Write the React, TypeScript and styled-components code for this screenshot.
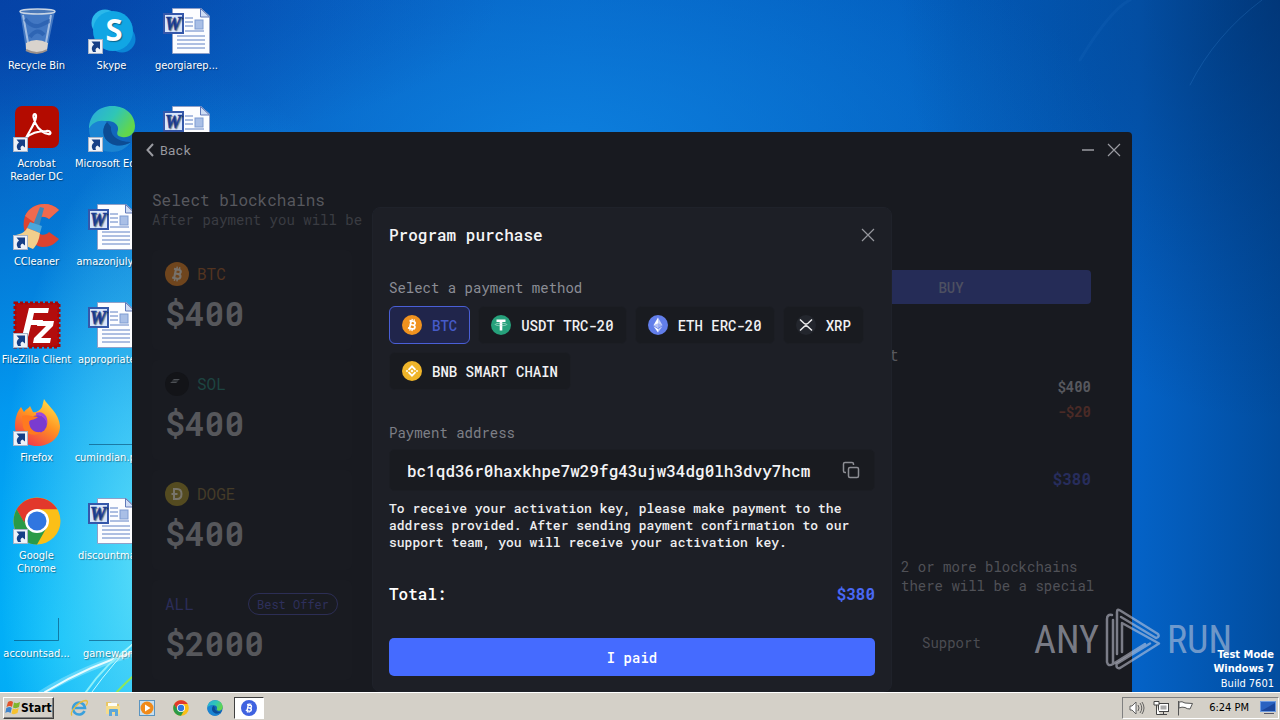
import React, { useState } from 'react';
import styled, { createGlobalStyle } from 'styled-components';

const MONO = '"Roboto Mono", "DejaVu Sans Mono", "Liberation Mono", monospace';
const TAHOMA = 'Tahoma, "DejaVu Sans Condensed", "DejaVu Sans", sans-serif';

const Global = createGlobalStyle`
  * { box-sizing: border-box; }
  body { margin: 0; font-family: ${TAHOMA}; }
  button, input { font: inherit; color: inherit; margin: 0; }
  button { cursor: pointer; }
  h1, h2, h3, p, ul, dl, dd, dt { margin: 0; padding: 0; font-weight: 400; }
  svg { display: block; flex: none; }
`;

const Screen = styled.div`
  display: flex;
  flex-direction: column;
  min-height: 100vh;
`;

const Desktop = styled.main`
  position: relative;
  flex: 1;
  overflow: hidden;
  background:
    radial-gradient(ellipse 150px 420px at 150px 560px, rgba(120, 240, 250, 0.75), rgba(60, 215, 250, 0) 100%),
    radial-gradient(ellipse 480px 600px at 60px 640px, #02b8fa 0%, rgba(2, 160, 246, 0.9) 40%, rgba(4, 130, 230, 0) 100%),
    radial-gradient(ellipse 560px 260px at 560px 150px, rgba(14, 132, 226, 0.85), rgba(10, 110, 208, 0) 100%),
    linear-gradient(to right, #0650b4 0%, #0562c4 45%, #025cbc 75%, #0462c6 89%, #014c9e 100%);
`;

const Wallpaper = styled.svg`
  position: absolute;
  inset: 0;
  width: 100%;
  height: 100%;
`;

const Shade = styled.div`
  position: absolute;
  inset: 0;
  background:
    radial-gradient(ellipse 380px 420px at 100% 0, rgba(0, 34, 84, 0.5), rgba(0, 40, 100, 0) 100%),
    radial-gradient(ellipse 500px 160px at 0 0, rgba(4, 50, 150, 0.45), rgba(4, 60, 160, 0) 100%);
`;

const Shortcuts = styled.ul`
  position: relative;
  display: grid;
  grid-auto-flow: column;
  grid-template-rows: repeat(7, 98px);
  grid-auto-columns: 73px;
  column-gap: 2px;
  list-style: none;
  padding-top: 7px;
  width: max-content;
  height: 0;
`;

const Shortcut = styled.li`
  position: relative;
  display: flex;
  flex-direction: column;
  align-items: center;
  gap: 4px;
  color: #fff;
  font-size: 11px;
  line-height: 13px;
  text-align: center;
  text-shadow: 1px 1px 1px rgba(0, 0, 0, 0.4);
`;

const ShortcutName = styled.span<{ $wrap?: boolean }>`
  white-space: ${(p) => (p.$wrap ? 'normal' : 'nowrap')};
`;

const AppWindow = styled.section`
  position: absolute;
  left: 132px;
  right: 148px;
  top: 132px;
  bottom: 0;
  overflow: hidden;
  display: flex;
  flex-direction: column;
  background: #181a20;
  border-radius: 4px 4px 0 0;
  color: #57585e;
  font-family: ${MONO};
  font-size: 14px;
`;

const TitleBar = styled.header`
  display: flex;
  align-items: center;
  justify-content: space-between;
  height: 36px;
  padding: 0 11px 0 14px;
  color: #9a9ba1;
`;

const WindowControls = styled.div`
  display: flex;
  gap: 12px;
`;

const PlainButton = styled.button`
  display: flex;
  align-items: center;
  gap: 6px;
  padding: 0;
  border: 0;
  background: none;
  font-size: 13px;
`;

const Page = styled.div`
  display: flex;
  justify-content: space-between;
  flex: 1;
  padding: 21px 41px 0 20px;
`;

const Plans = styled.div`
  display: flex;
  flex-direction: column;
  width: 220px;
`;

const PageTitle = styled.h1`
  font-size: 16px;
  line-height: 22px;
`;

const Hint = styled.p`
  line-height: 18px;
  color: #3a3c42;
  white-space: nowrap;
`;

const PlanList = styled.ul`
  display: flex;
  flex-direction: column;
  gap: 10px;
  margin-top: 21px;
  list-style: none;
`;

const PlanCard = styled.li`
  display: flex;
  flex-direction: column;
  gap: 8px;
  width: 200px;
  height: 100px;
  padding: 12px 13px;
  border-radius: 6px;
  background: #191b21;
`;

const PlanHead = styled.div`
  display: flex;
  align-items: center;
  gap: 8px;
  height: 24px;
`;

const PlanName = styled.h3<{ $tone: string }>`
  font-size: 16px;
  line-height: 22px;
  color: ${(p) => p.$tone};
`;

const PlanPrice = styled.p`
  font-size: 33px;
  line-height: 38px;
  font-weight: 700;
  color: #56575b;
`;

const Offer = styled.span`
  margin: 0 1px 0 auto;
  padding: 0 8px;
  border: 1px solid #2c2e55;
  border-radius: 11px;
  font-size: 12px;
  line-height: 20px;
  color: #2e305c;
  white-space: nowrap;
`;

const Sidebar = styled.aside`
  display: flex;
  flex-direction: column;
  width: 280px;
  padding-top: 81px;
`;

const BuyButton = styled.button`
  height: 34px;
  border: 0;
  border-radius: 4px;
  background: #252c57;
  color: #4d5061;
  font-weight: 500;
`;

const CartTitle = styled.h2`
  margin-top: 40px;
  padding-left: 78px;
  font-size: 16px;
  line-height: 22px;
`;

const Amounts = styled.div`
  display: flex;
  flex-direction: column;
  align-items: flex-end;
  margin-top: 8px;
  line-height: 25px;
  font-weight: 700;
`;

const Discount = styled.span`
  color: #4a2a26;
`;

const Due = styled.strong`
  margin-top: 42px;
  font-size: 16px;
  color: #272d5c;
`;

const Note = styled.p`
  margin-top: 66px;
  padding-left: 90px;
  line-height: 19px;
  white-space: nowrap;
  color: #505157;
`;

const SupportLink = styled.a`
  margin-top: 38px;
  padding-left: 111px;
  line-height: 19px;
  color: #4b4c52;
  text-decoration: none;
`;

const Overlay = styled.div`
  position: absolute;
  inset: 75px 0 0;
  display: flex;
  justify-content: center;
  pointer-events: none;
`;

const Dialog = styled.form`
  display: flex;
  flex-direction: column;
  width: 520px;
  padding: 17px 16px 15px;
  border: 1px solid #1f222a;
  border-radius: 8px;
  background: #1d1f26;
  color: #fff;
  pointer-events: auto;
`;

const DialogHead = styled.header`
  display: flex;
  align-items: center;
  justify-content: space-between;
  height: 20px;
  color: #96979d;
`;

const DialogTitle = styled.h2`
  font-size: 16px;
  line-height: 20px;
  font-weight: 500;
  color: #f4f4f6;
`;

const Methods = styled.fieldset`
  display: flex;
  flex-wrap: wrap;
  gap: 8px;
  min-width: 0;
  margin: 34px 0 0;
  padding: 0;
  border: 0;
`;

const Legend = styled.legend`
  padding: 0;
  margin-bottom: 9px;
  line-height: 18px;
  color: #8b8d95;
`;

const Method = styled.label<{ $on: boolean }>`
  display: flex;
  align-items: center;
  gap: 10px;
  height: 38px;
  padding: 0 12px;
  border: 1px solid ${(p) => (p.$on ? '#4a5fd6' : '#1c1e24')};
  border-radius: 6px;
  background: ${(p) => (p.$on ? '#20254b' : '#191b20')};
  color: ${(p) => (p.$on ? '#465bc8' : '#f1f1f3')};
  font-weight: 500;
  white-space: nowrap;
  cursor: pointer;
`;

const HiddenRadio = styled.input`
  position: absolute;
  opacity: 0;
  width: 1px;
  height: 1px;
`;

const FieldLabel = styled.label`
  margin-top: 34px;
  line-height: 18px;
  color: #7d7f87;
`;

const AddressBox = styled.div`
  display: flex;
  align-items: center;
  height: 42px;
  margin-top: 7px;
  padding: 0 14px 0 18px;
  border: 1px solid #1b1d23;
  border-radius: 6px;
  background: #191b20;
  color: #8d8e94;
`;

const AddressInput = styled.input`
  flex: 1;
  min-width: 0;
  margin-left: -1px;
  padding: 0;
  border: 0;
  outline: 0;
  background: none;
  font-size: 16px;
  font-weight: 500;
  color: #f3f3f5;
`;

const Instructions = styled.p`
  margin-top: 9px;
  font-size: 13px;
  line-height: 17px;
  font-weight: 500;
  color: #eeeef0;
`;

const Total = styled.div`
  display: flex;
  justify-content: space-between;
  margin-top: 32px;
  font-size: 16px;
  line-height: 22px;
  font-weight: 500;
`;

const TotalSum = styled.strong`
  color: #4968f4;
`;

const PaidButton = styled.button`
  flex: none;
  height: 38px;
  margin-top: 33px;
  border: 0;
  border-radius: 5px;
  background: #456bff;
  color: #fff;
  font-weight: 500;
`;

const Watermark = styled.div`
  position: absolute;
  right: 48px;
  bottom: 20px;
  display: flex;
  align-items: center;
  gap: 6px;
  height: 64px;
  color: rgba(205, 208, 222, 0.55);
  font-family: "Liberation Sans Narrow", "Roboto Condensed", Roboto, sans-serif;
  font-size: 38px;
  line-height: 38px;
  pointer-events: none;
`;

const BuildInfo = styled.div`
  position: absolute;
  right: 6px;
  bottom: 0;
  color: #fff;
  font-size: 11px;
  line-height: 14px;
  text-align: right;
`;

const BuildNumber = styled.div`
  line-height: 16px;
`;

const Taskbar = styled.footer`
  display: flex;
  align-items: center;
  height: 28px;
  padding: 3px 1px 1px 3px;
  border-top: 1px solid #fff;
  background: #d4d0c8;
  font-size: 11px;
`;

const StartButton = styled.button`
  display: flex;
  align-items: center;
  width: 51px;
  height: 22px;
  padding: 0 1px;
  border: 1px solid;
  border-color: #fff #404040 #404040 #fff;
  box-shadow: inset -1px -1px #808080;
  background: #d4d0c8;
  font-size: 12px;
  font-weight: 700;
`;

const Launchers = styled.div`
  display: flex;
  align-items: center;
  gap: 4px;
  margin-left: 10px;
`;

const Launcher = styled.button<{ $active?: boolean }>`
  display: flex;
  align-items: center;
  justify-content: center;
  width: 30px;
  height: 22px;
  padding: 0;
  border: 1px solid;
  border-color: ${(p) => (p.$active ? '#404040 #fff #fff #404040' : 'transparent')};
  background: ${(p) => (p.$active ? '#fff' : 'none')};
`;

const Tray = styled.div`
  display: flex;
  align-items: center;
  gap: 8px;
  height: 22px;
  margin-left: auto;
  padding: 0 2px 0 6px;
  border: 1px solid;
  border-color: #808080 #fff #fff #808080;
`;

const Clock = styled.time`
  padding: 0 3px 0 8px;
`;

/* ---------- drawings ---------- */

const Arrow = () => (
  <g transform="translate(0 32)">
    <rect x="0.5" y="0.5" width="14" height="14" fill="#eef2f8" stroke="#a8b4c8" />
    <path d="M3.500 2.500H12V10.500L9.500 8.500C7.500 9 7 11 8 13H5C3 10 3.500 7.500 6 5.500Z" fill="#163f86" />
  </g>
);

const WordDoc = () => (
  <svg width="48" height="48" viewBox="0 0 48 48">
    <path d="M9.500 1.500H38L46.500 9V46.500H9.500Z" fill="#fcfdff" stroke="#8fa0c8" />
    <path d="M37.500 1.500V10H46.500Z" fill="#cfdcf4" stroke="#6079b8" />
    <path d="M22 11h8M22 15h8M22 19h8M22 24h19M14 29h28M14 33h28M14 37h28M14 41h28" stroke="#5f80c4" />
    <rect x="32" y="13" width="8" height="9" fill="#a9bfe6" stroke="#7f9cd2" />
    <rect x="1" y="7" width="19" height="19" fill="#d8e6fb" stroke="#3558aa" strokeWidth="2" />
    <text x="10" y="23" textAnchor="middle" fontFamily="Liberation Serif, serif" fontWeight="700" fontStyle="italic" fontSize="18" fill="#1f429b" stroke="#1f429b" strokeWidth="0.600">W</text>
  </svg>
);

const RecycleBin = () => (
  <svg width="48" height="48" viewBox="0 0 48 48">
    <path d="M7 4L13 43Q24 49 34 43L42 4Z" fill="#7fa9dc" fillOpacity="0.5" />
    <path d="M10 8L16 41M38 8L32 41" stroke="#e2ecf8" strokeWidth="2" opacity="0.6" />
    <path d="M12 12Q20 22 28 18T37 14M17 30Q24 20 31 28" fill="none" stroke="#1f56a8" strokeWidth="4" opacity="0.550" />
    <path d="M13 36Q23 30 35 36L34 43Q24 49 13 43Z" fill="#d9d3cd" />
    <path d="M13 43Q24 49 34 43" fill="none" stroke="#9a8f8a" strokeWidth="2" />
    <ellipse cx="24.500" cy="4.500" rx="17.500" ry="2.500" fill="#4a78b8" stroke="#c9d5e4" strokeWidth="1.500" />
  </svg>
);

const Skype = () => (
  <svg width="48" height="48" viewBox="0 0 48 48">
    <circle cx="17" cy="16" r="13.500" fill="#2bb8ea" />
    <circle cx="34" cy="32" r="13.500" fill="#0a86d6" />
    <circle cx="25" cy="24" r="20" fill="#11a6e4" />
    <text x="26" y="34" textAnchor="middle" fontFamily="Open Sans, sans-serif" fontWeight="700" fontSize="31" fill="#fff">S</text>
    <Arrow />
  </svg>
);

const Acrobat = () => (
  <svg width="48" height="48" viewBox="0 0 48 48">
    <rect x="2" y="1" width="44" height="42" rx="7" fill="#b30b00" />
    <path d="M13 33C17 25 22 19 23 12C23.500 8 20 8 20.500 12C22 20 27 27 35 29C39 30 38 25 33 26C25 26 17 29 13 33Z" fill="none" stroke="#fff" strokeWidth="2.200" />
    <Arrow />
  </svg>
);

const EdgeShape = () => (
  <>
    <defs>
      <linearGradient id="edgeTop" x1="0" y1="0" x2="1" y2="0.500">
        <stop offset="0" stopColor="#2aa8e0" />
        <stop offset="0.550" stopColor="#2fc6b6" />
        <stop offset="1" stopColor="#62d64c" />
      </linearGradient>
    </defs>
    <circle cx="24" cy="24" r="23" fill="#1166bb" />
    <path d="M1 24C1 10 11 1 24 1C39 1 47 11 47 21C47 30 40 33 34 32C28 31 29 28 30 25C31 20 26 16 20 16C11 16 4 20 1 24Z" fill="url(#edgeTop)" />
    <path d="M1 24C4 17 13 14 19 17C14 22 14 33 22 38C29 42 37 41 43 37C38 44 31 47 24 47C10 47 1 36 1 24Z" fill="#1a84d2" />
    <path d="M19 17C14 22 13 33 22 38C29 42 37 41 43 37C35 37 22 34 23 22Z" fill="#0c4c94" />
  </>
);

const Edge = () => (
  <svg width="48" height="48" viewBox="0 0 48 48"><EdgeShape /><Arrow /></svg>
);

const CCleaner = () => (
  <svg width="48" height="48" viewBox="0 0 48 48">
    <path d="M46 7C36 -3 18 0 12 13C7 27 16 43 30 44C37 44 42 41 46 36L36 29C32 34 24 32 22 25C21 17 29 10 36 16Z" fill="#dd4330" />
    <path d="M46 7C36 -3 18 0 12 13L22 20C24 13 31 12 36 16Z" fill="#ef6a4e" />
    <path d="M27 4L31 5 26 24 20 22Z" fill="#3f87b9" />
    <path d="M17 19L29 23 27 30 14 25Z" fill="#4aa7dd" />
    <path d="M14 25L27 30C26 37 24 42 20 46C12 43 6 38 3 32C8 31 12 29 14 25Z" fill="#f2cf8c" />
    <Arrow />
  </svg>
);

const FileZilla = () => (
  <svg width="48" height="48" viewBox="0 0 48 48">
    <rect x="2" y="2" width="44" height="44" fill="#b30d0d" stroke="#a30808" strokeWidth="3" strokeDasharray="3 2" />
    <path d="M16 7H36L35 12H21L19.500 19H30L29 24H18L14 40H8Z" fill="#fff" />
    <path d="M25 20H41L40 25 28 37H38L37 42H20L21 37 33 25H24Z" fill="#fff" />
    <Arrow />
  </svg>
);

const Firefox = () => (
  <svg width="48" height="48" viewBox="0 0 48 48">
    <defs>
      <linearGradient id="fox" x1="0.800" y1="0" x2="0.200" y2="1">
        <stop offset="0" stopColor="#ffe14a" />
        <stop offset="0.450" stopColor="#ff9422" />
        <stop offset="1" stopColor="#f0304e" />
      </linearGradient>
    </defs>
    <path d="M31 0C35 7 46 14 47 27C47 39 37 47 24 47C11 47 2 38 2 27C2 19 4 13 8 8L11 13C14 9 15 10 17 7L20 13C22 14 27 12 29 8Z" fill="url(#fox)" />
    <circle cx="25" cy="25" r="9" fill="#7a3bd0" />
    <path d="M9 17C14 15 18 17 25 18C22 21 19 20 16 22C16 30 21 34 28 33C24 38 12 36 10 28Z" fill="#ff7a1f" />
    <path d="M23 14C31 11 36 19 34 26C33 19 29 16 23 16Z" fill="#9b45e0" />
    <Arrow />
  </svg>
);

const ChromeShape = () => (
  <>
    <circle cx="24" cy="24" r="23.500" fill="#fbbf17" />
    <path d="M3.700 12.300A23.500 23.500 0 0 0 24 47.500L34 30 24 35 14 30Z" fill="#2a9a48" />
    <path d="M3.700 12.300L14 30 24 24Z" fill="#2a9a48" />
    <path d="M3.700 12.300A23.500 23.500 0 0 1 44.300 12.300H24L14 18 11 25Z" fill="#e2382c" />
    <circle cx="24" cy="24" r="12" fill="#fff" />
    <circle cx="24" cy="24" r="9.500" fill="#3076e0" />
  </>
);

const Chrome = () => (
  <svg width="48" height="48" viewBox="0 0 48 48"><ChromeShape /><Arrow /></svg>
);

const EmptyIcon = ({ side }: { side?: boolean }) => (
  <svg width="48" height="48" viewBox="0 0 48 48">
    <path d={side ? 'M1 45.500H45.500V23' : 'M1 45.500H46'} fill="none" stroke="#06486e" opacity="0.600" />
  </svg>
);

const BtcMark = ({ size, bg, fg }: { size: number; bg: string; fg: string }) => (
  <svg width={size} height={size} viewBox="0 0 24 24">
    <circle cx="12" cy="12" r="12" fill={bg} />
    <g transform="rotate(12 12 12)" fill="none" stroke={fg}>
      <path d="M8 7.500H13Q15.300 7.500 15.300 9.600T13 11.800H10M13 11.800Q16 11.900 16 14.200T13.300 16.500H8M10 7.500V16.500" strokeWidth="2.100" />
      <path d="M10.800 4.800V7.500M13.400 4.800V7.500M10.800 16.500V19.200M13.400 16.500V19.200" strokeWidth="1.500" />
    </g>
  </svg>
);

const SolMark = () => (
  <svg width="24" height="24" viewBox="0 0 24 24">
    <circle cx="12" cy="12" r="12" fill="#131418" />
    <path d="M7 8.500L9 7H15L13 8.500ZM5 11L7 9.500H13L11 11Z" fill="#4d5055" />
  </svg>
);

const DogeMark = () => (
  <svg width="24" height="24" viewBox="0 0 24 24">
    <circle cx="12" cy="12" r="12" fill="#544b20" />
    <path d="M9 7H12Q16.500 7 16.500 12T12 17H9ZM6.500 12H12.500" fill="none" stroke="#77746a" strokeWidth="2" />
  </svg>
);

const UsdtMark = () => (
  <svg width="20" height="20" viewBox="0 0 20 20">
    <circle cx="10" cy="10" r="10" fill="#26a17b" />
    <path d="M5.500 4.500H14.500V7H11.300V15.500H8.700V7H5.500Z" fill="#fff" />
    <ellipse cx="10" cy="9.500" rx="5.800" ry="1.200" fill="none" stroke="#c9ebe0" strokeWidth="0.600" />
  </svg>
);

const EthMark = () => (
  <svg width="20" height="20" viewBox="0 0 20 20">
    <circle cx="10" cy="10" r="10" fill="#627eea" />
    <path d="M10 2.500L5.500 10.300 10 13Z" fill="#fff" />
    <path d="M10 2.500L14.500 10.300 10 13Z" fill="#c4cff8" />
    <path d="M5.500 11.200L10 17.500V13.900Z" fill="#fff" />
    <path d="M14.500 11.200L10 17.500V13.900Z" fill="#c4cff8" />
    <path d="M10 8.200L5.500 10.300 10 13 14.500 10.300Z" fill="#8397ec" opacity="0.600" />
  </svg>
);

const XrpMark = () => (
  <svg width="20" height="20" viewBox="0 0 20 20">
    <circle cx="10" cy="10" r="10" fill="#23262d" />
    <path d="M4 4.500L8 8.300Q10 10 12 8.300L16 4.500M4 15.500L8 11.700Q10 10 12 11.700L16 15.500" fill="none" stroke="#eee" strokeWidth="1.500" />
  </svg>
);

const BnbMark = () => (
  <svg width="20" height="20" viewBox="0 0 20 20">
    <circle cx="10" cy="10" r="10" fill="#efb52a" />
    <path d="M6.500 8.800L10 5.300 13.500 8.800M6.500 11.200L10 14.700 13.500 11.200" fill="none" stroke="#fff" strokeWidth="1.800" />
    <path d="M10 8.500L11.500 10 10 11.500 8.500 10ZM5 8.800L6.200 10 5 11.200 3.800 10ZM15 8.800L16.200 10 15 11.200 13.800 10Z" fill="#fff" />
  </svg>
);

const Cross = () => (
  <svg width="14" height="14" viewBox="0 0 14 14"><path d="M1 1L13 13M13 1L1 13" stroke="currentColor" strokeWidth="1.200" /></svg>
);

const WindowsFlag = () => (
  <svg width="16" height="16" viewBox="0 0 16 16">
    <path d="M3 2Q6 0 8 2L7 7Q5 5 1.500 7Z" fill="#e2532a" />
    <path d="M9 2.500Q12 4 15 2L14 7Q11 9 8 7.500Z" fill="#7fb62e" />
    <path d="M1.300 8Q5 6 6.800 8L5.500 13Q3 11 0.300 13Z" fill="#3d84cc" />
    <path d="M7.800 8.500Q11 10 13.700 8L12.500 13Q9 15 6.500 13.500Z" fill="#f7c22f" />
  </svg>
);

const IeIcon = () => (
  <svg width="18" height="18" viewBox="0 0 18 18">
    <path d="M14.500 12A6 6 0 1 1 15 9H5" fill="none" stroke="#3aa0dc" strokeWidth="2.600" />
    <path d="M2 16.500C-1 13 9 2 16 1.500C18.500 2 17 5 16 6.500" fill="none" stroke="#e9bd3a" strokeWidth="1.300" />
  </svg>
);

const ExplorerIcon = () => (
  <svg width="18" height="18" viewBox="0 0 18 18">
    <path d="M2 3H7L8 5H15V15H2Z" fill="#e9c765" />
    <path d="M4 4H13V8H4Z" fill="#fdfdf6" />
    <path d="M2 7H16V15H2Z" fill="#f5dc8c" />
    <path d="M5 17V11Q5 10 6 10H13Q14 10 14 11V17H11V13H8V17Z" fill="#5ea7d8" />
  </svg>
);

const PlayerIcon = () => (
  <svg width="18" height="18" viewBox="0 0 18 18">
    <rect x="1.500" y="1.500" width="15" height="15" fill="#c8dff0" stroke="#5a94c0" />
    <circle cx="9" cy="9" r="6.500" fill="#f08a1a" />
    <path d="M7 5.500L12.500 9 7 12.500Z" fill="#fff" />
  </svg>
);

const desktopItems: { name: string; icon: React.ReactNode; wrap?: boolean }[] = [
  { name: 'Recycle Bin', icon: <RecycleBin /> },
  { name: 'Acrobat Reader DC', icon: <Acrobat />, wrap: true },
  { name: 'CCleaner', icon: <CCleaner /> },
  { name: 'FileZilla Client', icon: <FileZilla /> },
  { name: 'Firefox', icon: <Firefox /> },
  { name: 'Google Chrome', icon: <Chrome />, wrap: true },
  { name: 'accountsad...', icon: <EmptyIcon side /> },
  { name: 'Skype', icon: <Skype /> },
  { name: 'Microsoft Edge', icon: <Edge /> },
  { name: 'amazonjuly.rtf', icon: <WordDoc /> },
  { name: 'appropriate...', icon: <WordDoc /> },
  { name: 'cumindian.png', icon: <EmptyIcon /> },
  { name: 'discountma...', icon: <WordDoc /> },
  { name: 'gamew.png', icon: <EmptyIcon /> },
  { name: 'georgiarep...', icon: <WordDoc /> },
  { name: '', icon: <WordDoc /> },
];

const plans: { name: string; price: string; tone: string; icon?: React.ReactNode; offer?: string }[] = [
  { name: 'BTC', price: '$400', tone: '#533420', icon: <BtcMark size={24} bg="#6f451d" fg="#77726c" /> },
  { name: 'SOL', price: '$400', tone: '#1d4541', icon: <SolMark /> },
  { name: 'DOGE', price: '$400', tone: '#453c28', icon: <DogeMark /> },
  { name: 'ALL', price: '$2000', tone: '#2b2d58', offer: 'Best Offer' },
];

const methods = [
  { id: 'btc', name: 'BTC', icon: <BtcMark size={20} bg="#f0921f" fg="#fff" /> },
  { id: 'usdt', name: 'USDT TRC-20', icon: <UsdtMark /> },
  { id: 'eth', name: 'ETH ERC-20', icon: <EthMark /> },
  { id: 'xrp', name: 'XRP', icon: <XrpMark /> },
  { id: 'bnb', name: 'BNB SMART CHAIN', icon: <BnbMark /> },
];

export default function App() {
  const [method, setMethod] = useState('btc');

  return (
    <Screen>
      <Global />
      <Desktop>
        <Shade />
        <Wallpaper viewBox="0 0 1280 692" preserveAspectRatio="none" aria-hidden="true">
          <g fill="none" strokeLinecap="round">
            <path d="M40 694Q85 666 140 652" stroke="#c8f6ff" strokeWidth="6" opacity="0.350" />
            <path d="M45 692Q90 665 140 650" stroke="#e6fcff" strokeWidth="2" />
            <path d="M86 692Q105 664 136 642" stroke="#8ff0fa" strokeWidth="2" />
            <path d="M92 692Q112 664 140 636" stroke="#c8faff" strokeWidth="1" />
            <path d="M117 692Q124 684 140 670" stroke="#8ee85a" strokeWidth="2" />
            <path d="M1190 85Q1215 35 1262 0" stroke="#3c8bd6" opacity="0.250" />
            <path d="M1080 60Q1110 10 1130 0" stroke="#3c8bd6" opacity="0.100" strokeWidth="3" />
          </g>
        </Wallpaper>
        <Shortcuts>
          {desktopItems.map((item, i) => (
            <Shortcut key={i}>
              {item.icon}
              <ShortcutName $wrap={item.wrap}>{item.name}</ShortcutName>
            </Shortcut>
          ))}
        </Shortcuts>

        <AppWindow>
          <TitleBar>
            <PlainButton type="button">
              <svg width="8" height="14" viewBox="0 0 8 14"><path d="M7 1L1.500 7 7 13" fill="none" stroke="currentColor" strokeWidth="2" /></svg>
              Back
            </PlainButton>
            <WindowControls>
              <PlainButton type="button" aria-label="Minimize">
                <svg width="14" height="14" viewBox="0 0 14 14"><path d="M1 7H13" stroke="currentColor" strokeWidth="1.500" /></svg>
              </PlainButton>
              <PlainButton type="button" aria-label="Close window"><Cross /></PlainButton>
            </WindowControls>
          </TitleBar>
          <Page>
            <Plans>
              <PageTitle>Select blockchains</PageTitle>
              <Hint>After payment you will be</Hint>
              <PlanList>
                {plans.map((plan) => (
                  <PlanCard key={plan.name}>
                    <PlanHead>
                      {plan.icon}
                      <PlanName $tone={plan.tone}>{plan.name}</PlanName>
                      {plan.offer && <Offer>{plan.offer}</Offer>}
                    </PlanHead>
                    <PlanPrice>{plan.price}</PlanPrice>
                  </PlanCard>
                ))}
              </PlanList>
            </Plans>
            <Sidebar>
              <BuyButton type="button">BUY</BuyButton>
              <CartTitle>t</CartTitle>
              <Amounts>
                <span>$400</span>
                <Discount>-$20</Discount>
                <Due>$380</Due>
              </Amounts>
              <Note>2 or more blockchains<br />there will be a special</Note>
              <SupportLink href="#support">Support</SupportLink>
            </Sidebar>
          </Page>

          <Overlay>
            <Dialog onSubmit={(e) => e.preventDefault()}>
              <DialogHead>
                <DialogTitle>Program purchase</DialogTitle>
                <PlainButton type="button" aria-label="Close dialog"><Cross /></PlainButton>
              </DialogHead>
              <Methods>
                <Legend>Select a payment method</Legend>
                {methods.map((m) => (
                  <Method key={m.id} $on={method === m.id}>
                    <HiddenRadio type="radio" name="method" checked={method === m.id} onChange={() => setMethod(m.id)} />
                    {m.icon}
                    {m.name}
                  </Method>
                ))}
              </Methods>
              <FieldLabel htmlFor="address">Payment address</FieldLabel>
              <AddressBox>
                <AddressInput id="address" readOnly value="bc1qd36r0haxkhpe7w29fg43ujw34dg0lh3dvy7hcm" />
                <PlainButton type="button" aria-label="Copy address">
                  <svg width="18" height="18" viewBox="0 0 18 18" fill="none" stroke="currentColor" strokeWidth="1.500">
                    <rect x="6.500" y="6.500" width="10" height="10" rx="1.500" />
                    <path d="M4 11.500H3Q1.500 11.500 1.500 10V3Q1.500 1.500 3 1.500H10Q11.500 1.500 11.500 3V4" />
                  </svg>
                </PlainButton>
              </AddressBox>
              <Instructions>
                To receive your activation key, please make payment to the address provided. After sending
                payment confirmation to our support team, you will receive your activation key.
              </Instructions>
              <Total>
                <span>Total:</span>
                <TotalSum>$380</TotalSum>
              </Total>
              <PaidButton type="submit">I paid</PaidButton>
            </Dialog>
          </Overlay>
        </AppWindow>

        <Watermark>
          <span>ANY</span>
          <svg width="56" height="64" viewBox="0 0 56 64" fill="none" stroke="currentColor" strokeWidth="2.500" strokeLinejoin="round" strokeLinecap="round">
            <path d="M7 7Q2 6 2 11V54Q3 59 8 56V12M8 56L40 36" />
            <path d="M12 46V4Q12 0 16 3L53 26Q55 29 51 30L16 9" />
            <path d="M17 44V15L54 35.500 15 60Q11 61 11.500 56L45 35.500" />
          </svg>
          <span>RUN</span>
        </Watermark>
        <BuildInfo>
          <strong>Test Mode<br />Windows 7</strong>
          <BuildNumber>Build 7601</BuildNumber>
        </BuildInfo>
      </Desktop>

      <Taskbar>
        <StartButton type="button"><WindowsFlag />Start</StartButton>
        <Launchers>
          <Launcher type="button" aria-label="Internet Explorer"><IeIcon /></Launcher>
          <Launcher type="button" aria-label="Explorer"><ExplorerIcon /></Launcher>
          <Launcher type="button" aria-label="Media Player"><PlayerIcon /></Launcher>
          <Launcher type="button" aria-label="Chrome"><svg width="16" height="16" viewBox="0 0 48 48"><ChromeShape /></svg></Launcher>
          <Launcher type="button" aria-label="Edge"><svg width="16" height="16" viewBox="0 0 48 48"><EdgeShape /></svg></Launcher>
          <Launcher type="button" aria-label="Wallet" $active><BtcMark size={16} bg="#3f62e0" fg="#fff" /></Launcher>
        </Launchers>
        <Tray>
          <svg width="16" height="16" viewBox="0 0 16 16" fill="#fff" stroke="#555" strokeWidth="0.900">
            <path d="M1 6H3L7 2V14L3 10H1Z" />
            <path d="M9 5Q11 8 9 11M11 3Q14.500 8 11 13M13 2Q17 8 13 14" fill="none" />
          </svg>
          <svg width="16" height="16" viewBox="0 0 16 16" fill="#fff" stroke="#444">
            <rect x="5.500" y="3.500" width="10" height="8" />
            <rect x="7.500" y="5.500" width="6" height="4" fill="#aaa" stroke="none" />
            <path d="M7 14.500H14M10.500 12V14" />
            <path d="M1 1.500H6V5H1ZM3.500 5V14.500H7" />
          </svg>
          <svg width="16" height="16" viewBox="0 0 16 16" fill="#fff" stroke="#555">
            <path d="M1.500 1V15.500" />
            <path d="M2 2Q5 1 8 3L15.500 3.500 13 9Q10 9 8 7.500 5 6.500 2 8Z" />
          </svg>
          <Clock>6:24 PM</Clock>
          <svg width="16" height="14" viewBox="0 0 16 14">
            <rect x="0.500" y="0.500" width="15" height="10" fill="#2a62c0" stroke="#6c9ae0" />
            <path d="M1 10L15 2V10Z" fill="#1a469c" />
            <path d="M4 12.500H14" stroke="#556" />
          </svg>
        </Tray>
      </Taskbar>
    </Screen>
  );
}
